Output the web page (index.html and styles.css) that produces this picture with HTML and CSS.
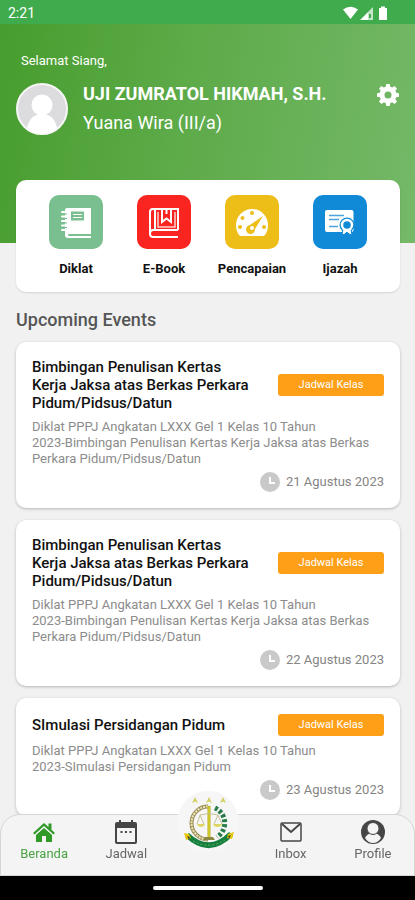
FILE: index.html
```html
<!DOCTYPE html>
<html lang="id">
<head>
<meta charset="utf-8">
<meta name="viewport" content="width=device-width, initial-scale=1">
<title>Beranda</title>
<link rel="stylesheet" href="styles.css">
</head>
<body>
<div class="app">
  <div class="status">
    <span>2:21</span>
    <svg class="status-icons" width="48" height="16" viewBox="0 0 48 16" fill="#fff" aria-hidden="true">
      <path d="M0 4.500Q7.500-1 15 4.500L7.500 14Z"/>
      <path d="M30 2V15H17Z" opacity=".7"/><path d="M25 7.500V15H17.500Z"/><path d="M26 9h2v4h-2z" fill="#3fab4c"/>
      <path d="M36 3h2V1.500h4V3h2v12h-8z"/>
    </svg>
  </div>

  <header class="hero">
    <p class="greeting">Selamat Siang,</p>
    <div class="person">
      <svg class="avatar" viewBox="0 0 52 52" aria-hidden="true">
        <circle cx="26" cy="26" r="25" fill="#dcdcdf" stroke="#f6f6f6" stroke-width="2"/>
        <circle cx="26" cy="22" r="10.500" fill="#fff"/>
        <path d="M11 45Q14 31 26 31T41 45Q35 51 26 51T11 45Z" fill="#fff"/>
      </svg>
      <div class="identity">
        <h1>UJI ZUMRATOL HIKMAH, S.H.</h1>
        <p>Yuana Wira (III/a)</p>
      </div>
      <button class="settings" type="button" aria-label="Pengaturan">
        <svg width="24" height="24" viewBox="0 0 24 24" aria-hidden="true">
          <g fill="#fff">
            <circle cx="12" cy="12" r="8.500"/>
            <g id="teeth"><path d="M9.500 5 10.300 1h3.400l.8 4v14l-.8 4h-3.400l-.8-4z"/><path d="M9.500 5 10.300 1h3.400l.8 4v14l-.8 4h-3.400l-.8-4z" transform="rotate(90 12 12)"/></g>
            <use href="#teeth" transform="rotate(45 12 12)"/>
          </g>
          <circle cx="12" cy="12" r="3.500" fill="#70b562"/>
        </svg>
      </button>
    </div>
  </header>

  <nav class="menu" aria-label="Menu">
    <a href="#diklat"><span class="tile green">
      <svg viewBox="0 0 54 54" aria-hidden="true"><path fill="#fff" d="M18 13h24v26H20q-1 0-1 1t1 1h22v2H19q-3 0-3-3V15q0-2 2-2z"/><path d="M22 16.500h13v9H22z" fill="#7abf90"/><path d="M24 19.500h9M24 22.500h9" stroke="#fff"/><path d="M13 17h5M13 21.500h5M13 26h5M13 30.500h5M13 35h5" stroke="#fff" stroke-width="2" stroke-linecap="round"/><path d="M15 19h3M15 23.500h3M15 28h3M15 32.500h3" stroke="#7abf90"/></svg>
    </span>Diklat</a>
    <a href="#ebook"><span class="tile red">
      <svg viewBox="0 0 54 54" fill="none" stroke="#fff" stroke-width="2" aria-hidden="true"><path d="M41 42H16q-3 0-3-3.500t3-3.500h25M13 39V17q0-3 3-3h25v21M18 14v21"/><path d="M25 14v13l4.500-3.500L34 27V14M29.500 14v5"/><path d="M21 17v15h17V17" stroke-width="1.500" opacity=".8"/></svg>
    </span>E-Book</a>
    <a href="#pencapaian"><span class="tile yellow">
      <svg viewBox="0 0 54 54" aria-hidden="true"><path fill="#fff" d="M15 41q-4-4-4-11a16 16 0 0 1 32 0q0 7-4 11z"/><g fill="#edbd18"><circle cx="15" cy="32" r="2"/><circle cx="17.500" cy="23" r="2"/><circle cx="27" cy="18" r="2"/><circle cx="39" cy="32" r="2"/><path d="M38 21 30 34a4.500 4.500 0 1 1-5-4z"/></g><circle cx="27" cy="33" r="2" fill="#fff"/></svg>
    </span>Pencapaian</a>
    <a href="#ijazah"><span class="tile blue">
      <svg viewBox="0 0 54 54" aria-hidden="true"><rect x="12" y="15" width="28.500" height="22" rx="2" fill="#fff"/><path d="M16 20.500h15M16 24.500h10M16 31.500h9" stroke="#4ba2dc" stroke-width="1.500"/><circle cx="34" cy="30" r="7.500" fill="#108ad6"/><path d="m30 34-1 6 3-1 2-2 2 2 3 1-1-6z" fill="#fff" stroke="#108ad6"/><circle cx="34" cy="30" r="5" fill="#108ad6" stroke="#fff" stroke-width="2.500"/></svg>
    </span>Ijazah</a>
  </nav>

  <main class="events">
    <h2>Upcoming Events</h2>
    <article class="card">
      <div class="card-head">
        <h3>Bimbingan Penulisan Kertas Kerja Jaksa atas Berkas Perkara Pidum/Pidsus/Datun</h3>
        <a class="badge" href="#kelas-1">Jadwal Kelas</a>
      </div>
      <p class="desc">Diklat PPPJ Angkatan LXXX Gel 1 Kelas 10 Tahun<br>2023-Bimbingan Penulisan Kertas Kerja Jaksa atas Berkas Perkara Pidum/Pidsus/Datun</p>
      <div class="date"><svg viewBox="0 0 20 20" aria-hidden="true"><circle cx="10" cy="10" r="10" fill="#c9c9c9"/><path d="M10 5v6h5" fill="none" stroke="#fff" stroke-width="2"/></svg><time datetime="2023-08-21">21 Agustus 2023</time></div>
    </article>
    <article class="card">
      <div class="card-head">
        <h3>Bimbingan Penulisan Kertas Kerja Jaksa atas Berkas Perkara Pidum/Pidsus/Datun</h3>
        <a class="badge" href="#kelas-2">Jadwal Kelas</a>
      </div>
      <p class="desc">Diklat PPPJ Angkatan LXXX Gel 1 Kelas 10 Tahun<br>2023-Bimbingan Penulisan Kertas Kerja Jaksa atas Berkas Perkara Pidum/Pidsus/Datun</p>
      <div class="date"><svg viewBox="0 0 20 20" aria-hidden="true"><circle cx="10" cy="10" r="10" fill="#c9c9c9"/><path d="M10 5v6h5" fill="none" stroke="#fff" stroke-width="2"/></svg><time datetime="2023-08-22">22 Agustus 2023</time></div>
    </article>
    <article class="card">
      <div class="card-head">
        <h3>SImulasi Persidangan Pidum</h3>
        <a class="badge" href="#kelas-3">Jadwal Kelas</a>
      </div>
      <p class="desc">Diklat PPPJ Angkatan LXXX Gel 1 Kelas 10 Tahun<br>2023-SImulasi Persidangan Pidum</p>
      <div class="date"><svg viewBox="0 0 20 20" aria-hidden="true"><circle cx="10" cy="10" r="10" fill="#c9c9c9"/><path d="M10 5v6h5" fill="none" stroke="#fff" stroke-width="2"/></svg><time datetime="2023-08-23">23 Agustus 2023</time></div>
    </article>
  </main>
</div>

<footer class="dock">
  <nav class="tabs" aria-label="Navigasi utama">
    <a class="active" href="#beranda">
      <svg viewBox="0 0 26 26" fill="#2f9a27" aria-hidden="true"><path d="M13 4 2 14l1.500 1.500L13 7l9.500 8.500L24 14l-3.500-3.200V4.500h-3v3.500z"/><path d="M13 9 5 16v7h6v-6h4v6h6v-7z"/></svg>Beranda</a>
    <a href="#jadwal">
      <svg viewBox="0 0 26 26" aria-hidden="true"><path fill="#454545" fill-rule="evenodd" d="M6 1h2v2h10V1h2v2h2q2 0 2 2v18q0 2-2 2H4q-2 0-2-2V5q0-2 2-2h2zM4 9v14h18V9z"/><path d="M7.500 13h2M12 13h2M16.500 13h2" stroke="#454545" stroke-width="2"/></svg>Jadwal</a>
    <a class="emblem" href="#kejaksaan" aria-label="Kejaksaan">
      <svg viewBox="0 0 62 62" aria-hidden="true">
        <circle cx="31" cy="31" r="31" fill="#f6f6f6"/>
        <g fill="#cfcf62"><path d="m18 6 3 6-3-1.500L15 12z"/><path d="m32 6 3 6-3-1.500L29 12z"/><path d="m46 6 3 6-3-1.500L43 12z"/></g>
        <path d="M31 15.500A16.500 16.500 0 0 0 31 48.500" fill="none" stroke="#9a8f55" stroke-width="4"/>
        <path d="M31 15.500A16.500 16.500 0 0 0 31 48.500" fill="none" stroke="#eee7c0" stroke-width="2" stroke-dasharray="2 1"/>
        <path d="M38 17A16.500 16.500 0 0 1 40 46" fill="none" stroke="#287b4b" stroke-width="5" stroke-dasharray="3 2"/>
        <path d="M32 15v32" stroke="#b6ae20" stroke-width="3"/><path d="M32 16v30" stroke="#e9df35"/>
        <path d="M23 24q9-3 18 0M23 24l-3 9M23 24l4 9M41 24l-4 9M41 24l4 9" fill="none" stroke="#c6c293"/>
        <path d="M20 33h8q-1 3-4 3t-4-3zM36 33h9q-1 3-4.500 3t-4.500-3z" fill="#ded765"/>
        <path d="M28 46h8l2 3H26z" fill="#8d8842"/>
        <path d="M10 44Q32 65 54 43" fill="none" stroke="#15803b" stroke-width="5.500"/>
        <path d="M16 50Q32 59 48 49" fill="none" stroke="#65aa78" stroke-dasharray="2 2"/>
        <path d="m7 42 5 1 2 4-5 2zM57 41l-6 2-1 4 5 1z" fill="#e6c713"/><path d="m10 45 3 1-1 3zM54 44l-3 1 1 3z" fill="#4f4a18"/>
      </svg>
    </a>
    <a href="#inbox">
      <svg viewBox="0 0 26 26" fill="none" stroke="#454545" stroke-width="1.500" aria-hidden="true"><rect x="3" y="4" width="20" height="18" rx="1"/><path d="m4 5 9 8 9-8" stroke-width="2"/></svg>Inbox</a>
    <a href="#profile">
      <svg viewBox="0 0 26 26" aria-hidden="true"><circle cx="13" cy="13" r="12" fill="#454545"/><path d="M5 19q2-4 5-4.500h6q3 .5 5 4.500-3 5-8 5t-8-5z" fill="#f4f4f4"/><circle cx="13" cy="9.500" r="6" fill="#f4f4f4" stroke="#454545"/></svg>Profile</a>
  </nav>
  <div class="system"><span></span></div>
</footer>
</body>
</html>
```
FILE: styles.css
```css
* { box-sizing: border-box; }
body, h1, h2, h3, p { margin: 0; }
body {
  background: #f1f1f1;
  font-family: Roboto, "Liberation Sans", sans-serif;
  color: #111;
}
a { color: inherit; text-decoration: none; }
svg { display: block; }

.app { padding-bottom: 84px; }

.status {
  display: flex;
  justify-content: space-between;
  align-items: center;
  height: 24px;
  padding: 2px 24px 0 8px;
  background: #3fab4c;
  color: #fff;
  font-size: 14px;
}

.hero {
  padding: 28px 15px 108px 16px;
  background: linear-gradient(100deg, #479d2d, #5eab4a 45%, #75b968);
  color: #fff;
}
.greeting { padding-left: 5px; font-size: 13px; line-height: 18px; }
.person { display: flex; align-items: flex-start; padding-top: 13px; }
.avatar { flex: none; width: 52px; height: 52px; }
.identity { flex: 1; padding-left: 15px; }
.identity h1 { font-size: 18px; font-weight: 700; line-height: 22px; }
.identity p { padding-top: 7px; font-size: 18px; line-height: 22px; }
.settings { padding: 0; border: 0; background: none; }

.menu {
  display: grid;
  grid-template-columns: repeat(4, 1fr);
  margin: -63px 15px 0 16px;
  padding: 15px 16px;
  background: #fff;
  border-radius: 10px;
  box-shadow: 0 1px 2px rgba(0, 0, 0, .12);
}
.menu a {
  display: flex;
  flex-direction: column;
  align-items: center;
  gap: 12px;
  font-size: 13px;
  font-weight: 700;
  line-height: 16px;
}
.tile { width: 54px; height: 54px; border-radius: 10px; }
.green { background: #7abf90; }
.red { background: #fa2420; }
.yellow { background: #edbd18; }
.blue { background: #108ad6; }

.events {
  display: flex;
  flex-direction: column;
  gap: 12px;
  padding: 18px 15px 0 16px;
}
.events h2 { font-size: 18px; font-weight: 500; line-height: 20px; color: #555; }

.card {
  padding: 16px;
  background: #fff;
  border-radius: 10px;
  box-shadow: 0 1px 3px rgba(0, 0, 0, .25);
}
.card-head { display: flex; align-items: center; justify-content: space-between; gap: 20px; }
.card h3 { flex: 1; font-size: 15px; font-weight: 500; line-height: 18px; }
.badge {
  flex: none;
  width: 106px;
  border-radius: 3px;
  background: #fe9f18;
  color: #fff;
  font-size: 11px;
  line-height: 22px;
  text-align: center;
}
.desc { padding-top: 7px; font-size: 13px; line-height: 16px; color: #8c8c8c; }
.date {
  display: flex;
  align-items: center;
  justify-content: flex-end;
  gap: 6px;
  padding-top: 5px;
  font-size: 13px;
  line-height: 20px;
  color: #858585;
}
.date svg { width: 20px; height: 20px; }

.dock { position: fixed; right: 0; bottom: 0; left: 0; }
.tabs {
  display: grid;
  grid-template-columns: repeat(5, 1fr);
  height: 62px;
  padding: 4px 0 0 2px;
  border: 1px solid #d5d5d5;
  border-radius: 20px 20px 0 0;
  background: #f4f4f4;
  color: #666;
  font-size: 13px;
  line-height: 16px;
}
.tabs a { display: flex; flex-direction: column; align-items: center; gap: 1px; }
.tabs svg { width: 26px; height: 26px; }
.tabs .active { color: #4aa443; }
.tabs .emblem { margin-top: -28px; }
.tabs .emblem svg { width: 62px; height: 62px; }
.system { display: flex; justify-content: center; padding: 10px 0; background: #000; }
.system span { width: 110px; height: 4px; border-radius: 2px; background: #fff; }
```
